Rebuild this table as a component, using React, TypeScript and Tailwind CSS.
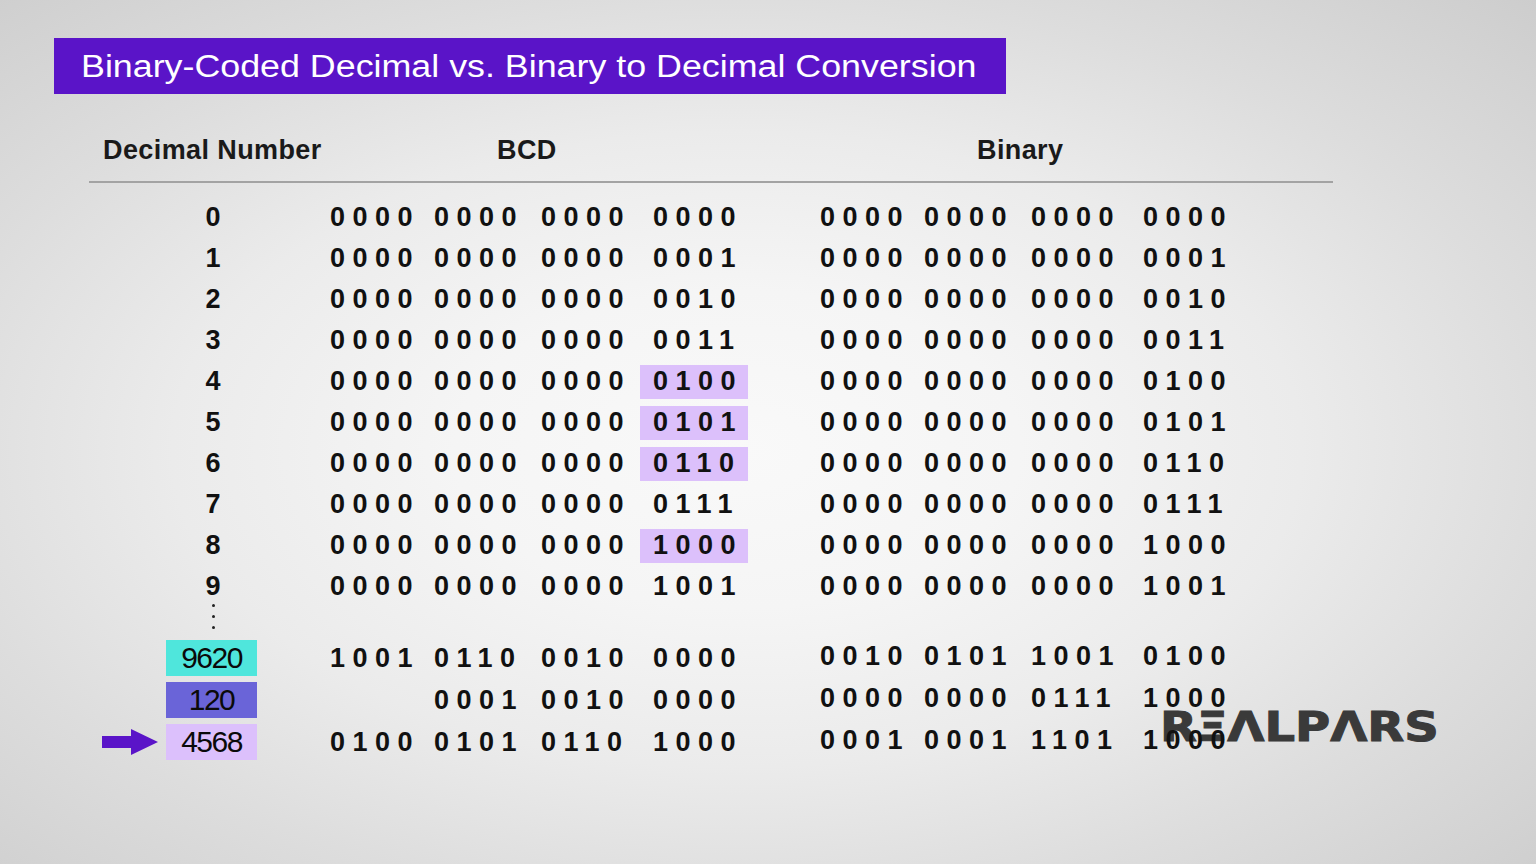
const bcdRows = [
  ["0000", "0000", "0000", "0000"],
  ["0000", "0000", "0000", "0001"],
  ["0000", "0000", "0000", "0010"],
  ["0000", "0000", "0000", "0011"],
  ["0000", "0000", "0000", "0100"],
  ["0000", "0000", "0000", "0101"],
  ["0000", "0000", "0000", "0110"],
  ["0000", "0000", "0000", "0111"],
  ["0000", "0000", "0000", "1000"],
  ["0000", "0000", "0000", "1001"],
];

// rows whose last BCD nibble is highlighted
const marked = [4, 5, 6, 8];

const bottomRows = [
  {
    value: "9620",
    box: "bg-[#4fe6dc]",
    arrow: false,
    bcd: ["1001", "0110", "0010", "0000"],
    bin: ["0010", "0101", "1001", "0100"],
  },
  {
    value: "120",
    box: "bg-[#6a64d8]",
    arrow: false,
    bcd: ["", "0001", "0010", "0000"],
    bin: ["0000", "0000", "0111", "1000"],
  },
  {
    value: "4568",
    box: "bg-[#dcc0fc]",
    arrow: true,
    bcd: ["0100", "0101", "0110", "1000"],
    bin: ["0001", "0001", "1101", "1000"],
  },
];

function Nibble({ bits }: { bits: string }) {
  return <span className="tracking-[7.5px] whitespace-nowrap">{bits}</span>;
}

function Groups({ cells, hi }: { cells: string[]; hi?: boolean }) {
  return (
    <>
      <div className="w-[104px]"><Nibble bits={cells[0]} /></div>
      <div className="w-[107px]"><Nibble bits={cells[1]} /></div>
      <div className="w-[99px]"><Nibble bits={cells[2]} /></div>
      <div
        className={`w-[108px] h-[34px] pl-[13px] flex items-center ${
          hi ? "bg-[#dcc0fb]" : ""
        }`}
      >
        <Nibble bits={cells[3]} />
      </div>
    </>
  );
}

function BinGroups({ cells }: { cells: string[] }) {
  return (
    <>
      <div className="w-[104px]"><Nibble bits={cells[0]} /></div>
      <div className="w-[107px]"><Nibble bits={cells[1]} /></div>
      <div className="w-[112px]"><Nibble bits={cells[2]} /></div>
      <div><Nibble bits={cells[3]} /></div>
    </>
  );
}

function Arrow() {
  return (
    <svg width="56" height="26" viewBox="0 0 56 26">
      <path d="M0 7 H29 V0 L56 13 L29 26 V19 H0 Z" fill="#5a14c8" />
    </svg>
  );
}

export default function App() {
  return (
    <div className="relative w-[1536px] h-[864px] overflow-hidden bg-[radial-gradient(ellipse_at_48%_52%,#f9f9f9_0%,#f5f5f5_25%,#ebebeb_50%,#dddddd_72%,#cdcdcd_100%)] font-['Liberation_Sans',Arial,sans-serif] text-[#111]">
      {/* Logo sits under the digits */}
      <div className="absolute left-[1160px] top-[707px] z-0 text-[40px] leading-none font-bold text-[#3a3a3a] font-['DejaVu_Sans',sans-serif] origin-left scale-x-[1.2] whitespace-nowrap [-webkit-text-stroke:1px_#3a3a3a]">
        RΞΛLPΛRS
      </div>

      <div className="relative z-10">
        {/* Title bar */}
        <div className="pt-[38px] pl-[54px]">
          <div className="w-[952px] h-[56px] bg-[#5a14c8] flex items-center pl-[27px]">
            <span className="text-white text-[31px] leading-none whitespace-nowrap origin-left scale-x-[1.155] inline-block">
              Binary-Coded Decimal vs. Binary to Decimal Conversion
            </span>
          </div>
        </div>

        {/* Column headings */}
        <div className="ml-[89px] w-[1244px] h-[89px] flex items-end pb-[17px] border-b-2 border-[#a3a3a3] text-[27px] leading-none font-bold text-[#1a1a1a] tracking-[0.4px]">
          <span className="pl-[14px] w-[408px]">Decimal Number</span>
          <span className="w-[480px]">BCD</span>
          <span>Binary</span>
        </div>

        {/* 0 - 9 */}
        <div className="mt-[14px] pl-[102px] text-[27px] leading-none font-bold">
          {bcdRows.map((cells, i) => (
            <div key={i} className="h-[41px] flex items-center">
              <div className="w-[64px]" />
              <div className="w-[91px] pl-[3px] text-center">{i}</div>
              <div className="w-[73px]" />
              <Groups cells={cells} hi={marked.includes(i)} />
              <div className="w-[72px]" />
              <BinGroups cells={cells} />
            </div>
          ))}

          {/* vertical ellipsis */}
          <div className="h-[30px] flex">
            <div className="w-[64px]" />
            <div className="w-[91px] pl-[3px] -mt-[3px] flex flex-col items-center gap-[8px]">
              <span className="w-[3px] h-[3px] rounded-full bg-[#222]" />
              <span className="w-[3px] h-[3px] rounded-full bg-[#222]" />
              <span className="w-[3px] h-[3px] rounded-full bg-[#222]" />
            </div>
          </div>

          {bottomRows.map((r) => (
            <div key={r.value} className="h-[42px] flex items-center">
              <div className="w-[64px] flex items-center">{r.arrow && <Arrow />}</div>
              <div
                className={`w-[91px] h-[36px] ${r.box} flex items-center justify-center text-[30px] font-normal tracking-[-1.5px] text-[#0a0a0a]`}
              >
                {r.value}
              </div>
              <div className="w-[73px]" />
              <Groups cells={r.bcd} />
              <div className="w-[72px]" />
              <div className="flex pb-[4px]">
                <BinGroups cells={r.bin} />
              </div>
            </div>
          ))}
        </div>
      </div>
    </div>
  );
}
